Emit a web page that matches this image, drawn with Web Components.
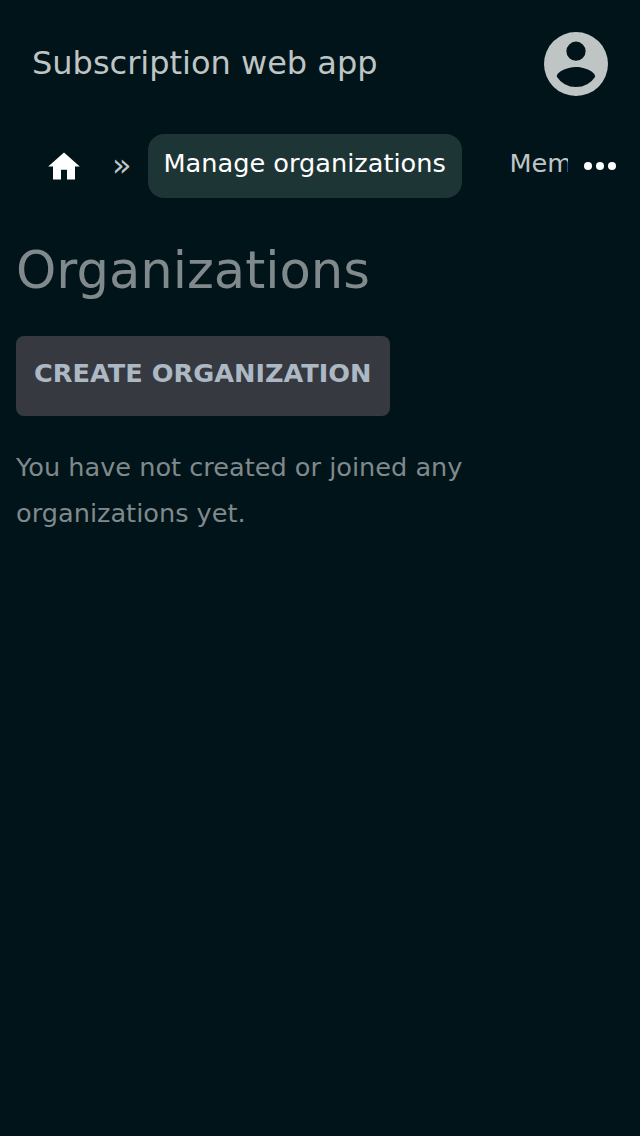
<!DOCTYPE html>
<html lang="en"><head><meta charset="utf-8"><title>Subscription web app</title>
<style>
html,body{margin:0;height:100%;background:#001419}
body{font-family:"DejaVu Sans",sans-serif;font-size:25.6px;color:#fff}
</style></head><body>
<sub-app></sub-app>
<script>
const define=(name,html)=>customElements.define(name,class extends HTMLElement{
  constructor(){super();const t=document.createElement('template');t.innerHTML=html;
  this.attachShadow({mode:'open'}).append(t.content.cloneNode(true));}
});
define('app-header',`<style>
:host{display:flex;height:128px;box-sizing:border-box;padding:0 32px;align-items:center;justify-content:space-between;font-size:32px;line-height:40px;color:#bfc4c5}
.title{padding-bottom:2px}
svg{display:block;width:64px;height:64px}
</style><span class="title"><slot></slot></span>
<svg viewBox="2 2 20 20"><path fill="#bfc4c5" fill-rule="evenodd" d="M12 2a10 10 0 1 0 0 20a10 10 0 1 0 0-20zM12 5a3 3 0 1 1 0 6a3 3 0 1 1 0-6zM12 19.2a7.2 7.2 0 0 1-6-3.22c.03-1.99 4-3.08 6-3.08s5.97 1.09 6 3.08a7.2 7.2 0 0 1-6 3.22z"/></svg>`);
define('nav-item',`<style>
:host{display:block;box-sizing:border-box;height:64px;padding:0 16.5px 0 15.5px;line-height:58px;border-radius:16px;color:#bfc4c5;white-space:nowrap;flex:none}
:host([active]){width:314px;background:#1e3535;color:#fff}
</style><slot></slot>`);
define('nav-bar',`<style>
:host{display:flex;height:64px;margin-top:6px;padding-right:24px}
.trail{display:flex;flex:none;width:568px;overflow:hidden}
.home{flex:none;width:32px;height:28px;margin:18px 0 0 48px}
.sep{flex:none;width:36px;margin-left:32px;font-size:32px;line-height:62px;color:#bfc4c5}
.next{margin-left:32px}
.more{flex:none;width:32px;height:8px;margin:28px 0 0 16px}
svg{display:block}
</style><div class="trail">
<svg class="home" viewBox="0 0 32 28"><path fill="#fff" d="M16 .4 .2 14.4H5V27.6h8V17.8h6v9.8h8V14.4h4.8z"/></svg>
<span class="sep">»</span><nav-item active>Manage organizations</nav-item><nav-item class="next">Members</nav-item></div>
<svg class="more" viewBox="0 0 32 8" fill="#fff"><circle cx="4" cy="4" r="4"/><circle cx="16" cy="4" r="4"/><circle cx="28" cy="4" r="4"/></svg>`);
define('action-button',`<style>
:host{display:block}
button{display:block;box-sizing:border-box;width:374px;height:80px;border:0;border-radius:8px;padding:0 .5px 6px 0;background:#363940;color:#acb9c5;font:bold 25.6px "DejaVu Sans",sans-serif;white-space:nowrap}
</style><button type="button"><slot></slot></button>`);
define('org-page',`<style>
:host{display:block;padding:42px 16px 0;color:#80898b}
h1{margin:0 0 36px;font-size:51.2px;font-weight:400;line-height:60px}
p{margin:28px 0 0;line-height:46px;color:#80898b}
</style><h1>Organizations</h1><action-button>CREATE ORGANIZATION</action-button>
<p>You have not created or joined any<br>organizations yet.</p>`);
define('sub-app',`<style>:host{display:block}</style><app-header>Subscription web app</app-header><nav-bar></nav-bar><org-page></org-page>`);
</script></body></html>
